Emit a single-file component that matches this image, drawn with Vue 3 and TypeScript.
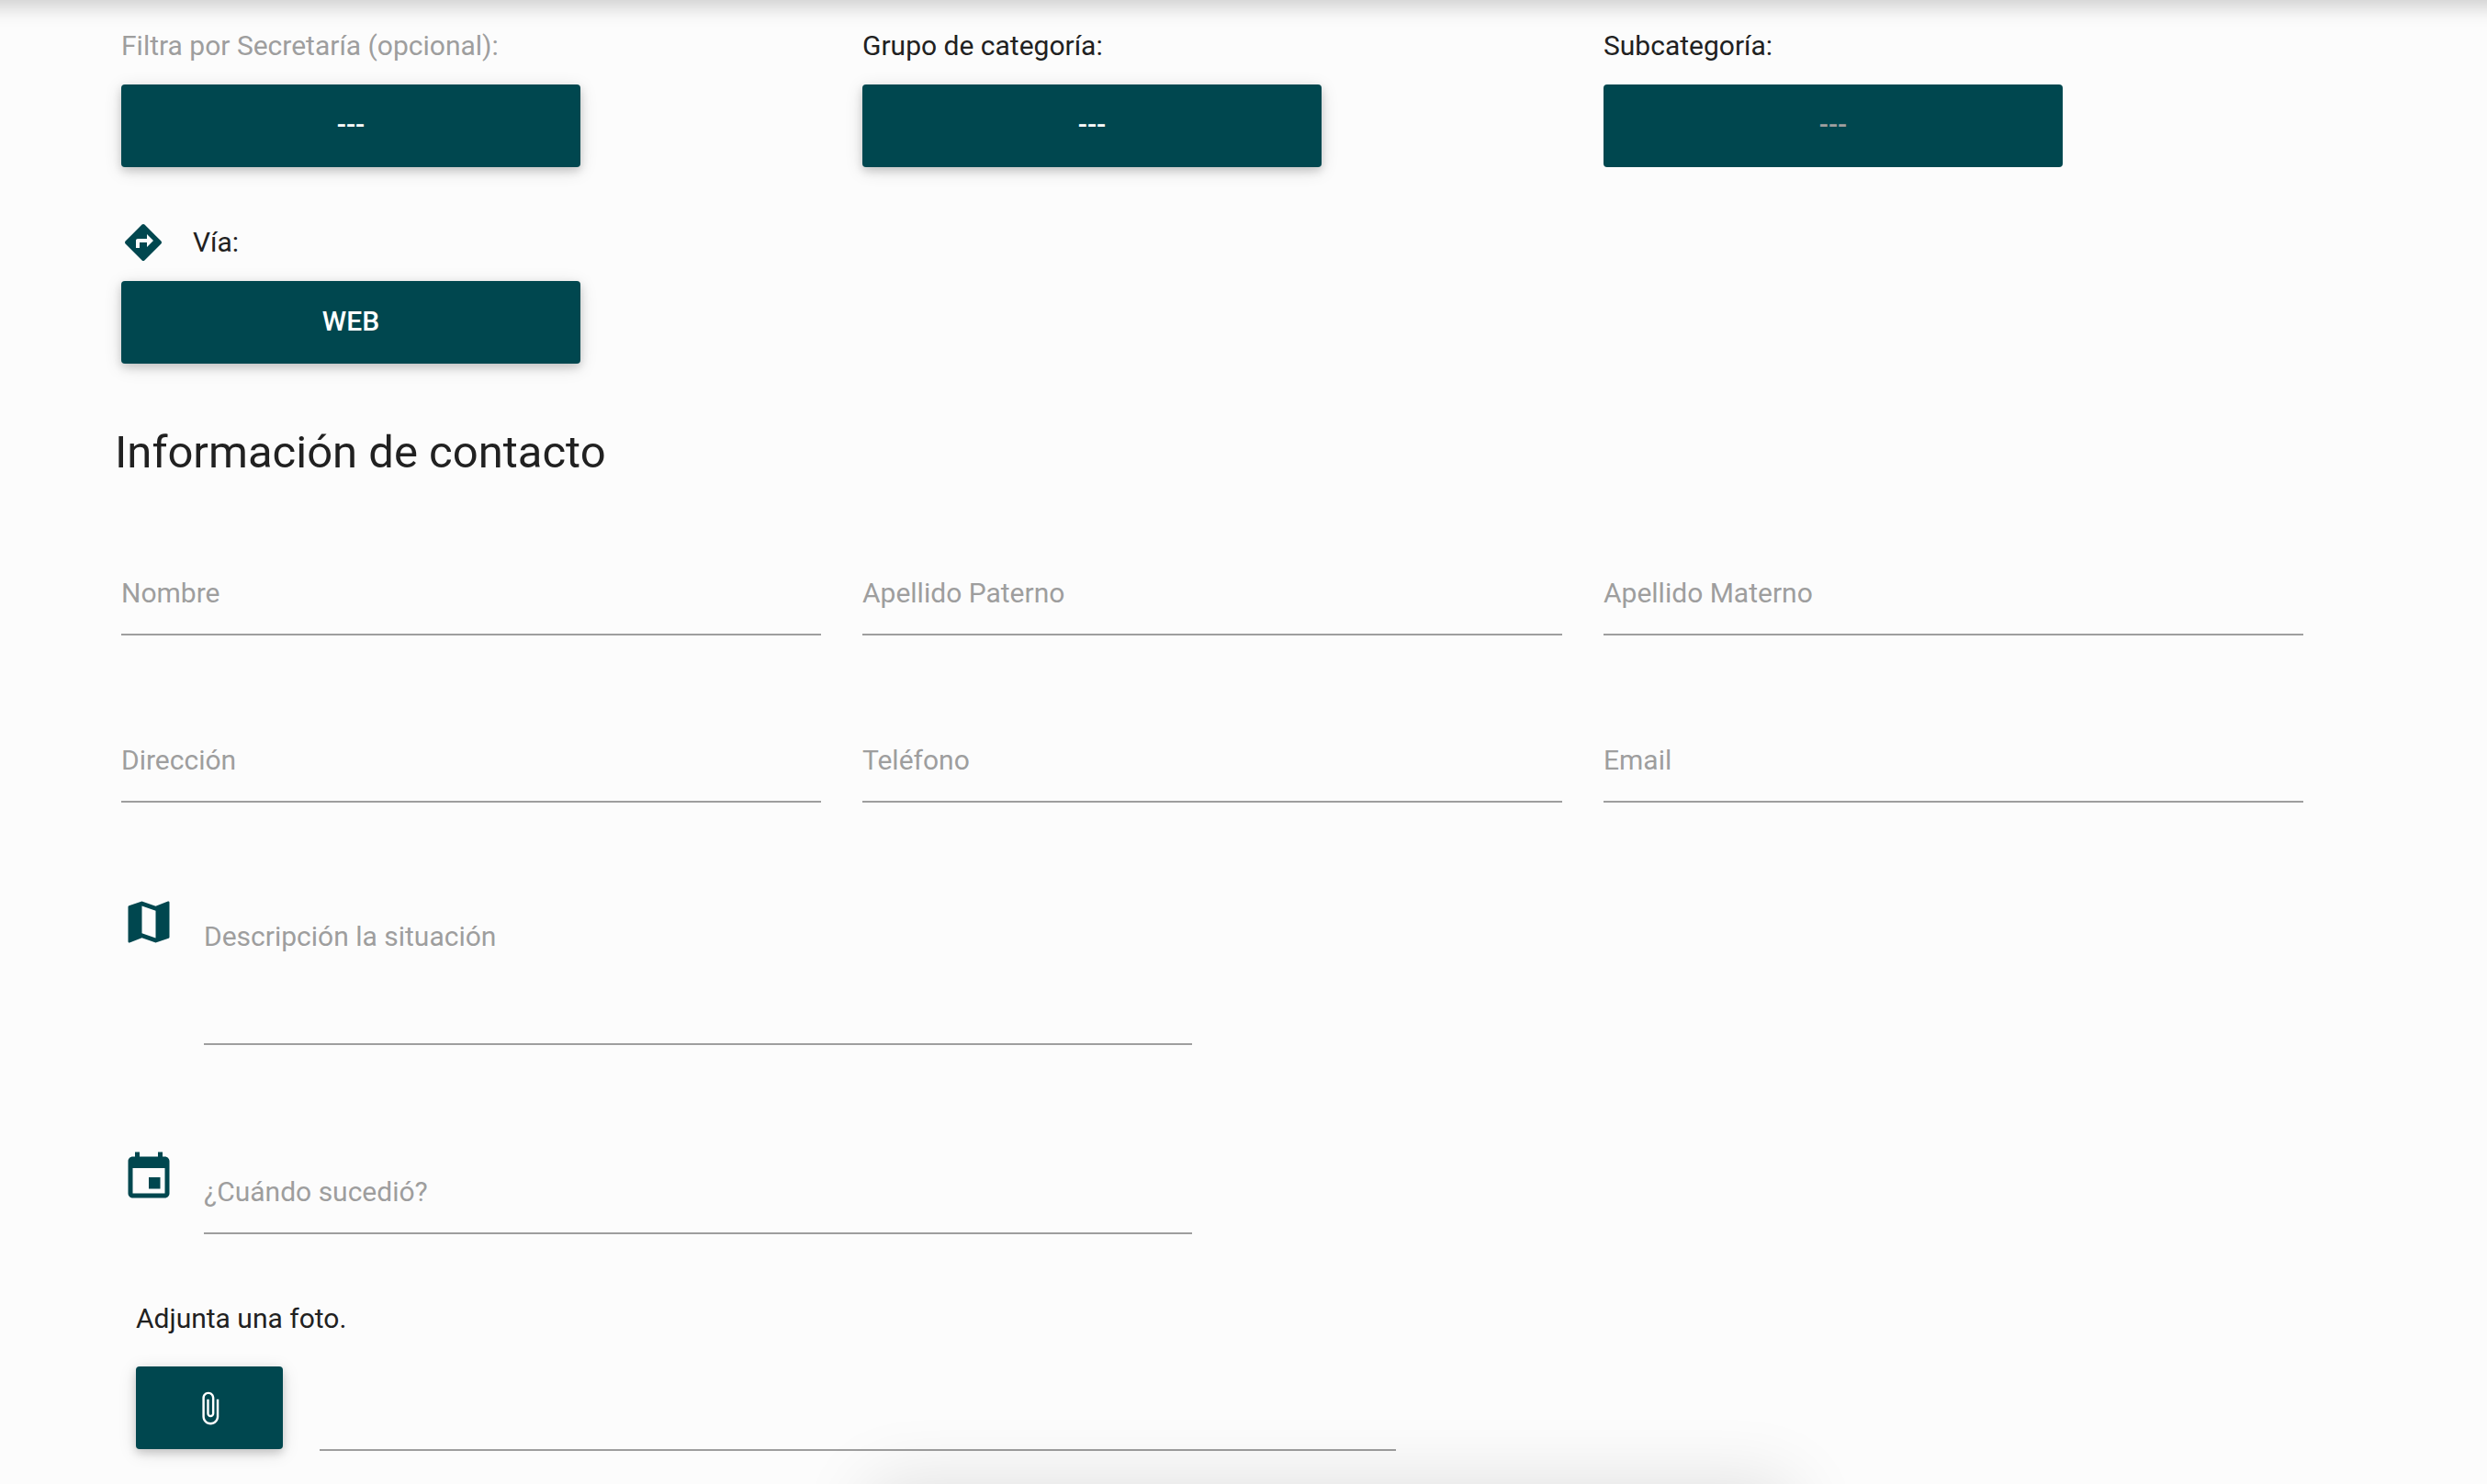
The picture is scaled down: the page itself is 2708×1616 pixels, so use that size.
<script setup lang="ts">
import { reactive, ref } from 'vue'

interface SelectField {
  id: string
  label: string
  options: string[]
  muted?: boolean
  disabled?: boolean
}

interface TextField {
  id: string
  label: string
  type: string
}

const categoryFields: SelectField[] = [
  { id: 'secretaria', label: 'Filtra por Secretaría (opcional):', options: ['---'], muted: true },
  { id: 'grupo', label: 'Grupo de categoría:', options: ['---'] },
  { id: 'subcategoria', label: 'Subcategoría:', options: ['---'], disabled: true },
]

const contactFields: TextField[] = [
  { id: 'nombre', label: 'Nombre', type: 'text' },
  { id: 'paterno', label: 'Apellido Paterno', type: 'text' },
  { id: 'materno', label: 'Apellido Materno', type: 'text' },
  { id: 'direccion', label: 'Dirección', type: 'text' },
  { id: 'telefono', label: 'Teléfono', type: 'tel' },
  { id: 'email', label: 'Email', type: 'email' },
]

const contact = reactive<Record<string, string>>({})
const description = ref('')
const date = ref('')
</script>

<template>
  <div class="page">
    <header class="navbar"></header>

    <form class="form" @submit.prevent>
      <div class="columns">
        <div v-for="field in categoryFields" :key="field.id" class="select-field">
          <label class="caption" :class="{ muted: field.muted }" :for="field.id">{{ field.label }}</label>
          <select :id="field.id" class="btn select" :disabled="field.disabled">
            <option v-for="option in field.options" :key="option">{{ option }}</option>
          </select>
        </div>
      </div>

      <div class="select-field via">
        <label class="caption with-icon" for="via">
          <svg class="icon-small" viewBox="0 0 24 24" aria-hidden="true">
            <path d="M21.71 11.29l-9-9c-.39-.39-1.02-.39-1.41 0l-9 9c-.39.39-.39 1.02 0 1.41l9 9c.39.39 1.02.39 1.41 0l9-9c.39-.38.39-1.01 0-1.41zM14 14.5V12h-4v3H8v-4c0-.55.45-1 1-1h5V7.500l3.500 3.500-3.500 3.500z" />
          </svg>
          <span>Vía:</span>
        </label>
        <select id="via" class="btn select">
          <option>WEB</option>
        </select>
      </div>

      <h2 class="title">Información de contacto</h2>

      <div class="columns contact">
        <div v-for="field in contactFields" :key="field.id" class="input-field">
          <label :for="field.id" v-show="!contact[field.id]">{{ field.label }}</label>
          <input :id="field.id" v-model="contact[field.id]" :type="field.type" />
        </div>
      </div>

      <div class="icon-row description">
        <svg class="icon" viewBox="0 0 24 24" aria-hidden="true">
          <path d="M20.500 3l-.16.03L15 5.100 9 3 3.360 4.900c-.21.07-.36.25-.36.48V20.500c0 .28.22.5.5.5l.16-.03L9 18.900l6 2.100 5.640-1.900c.21-.07.36-.25.36-.48V3.500c0-.28-.22-.5-.5-.5zM15 19l-6-2.110V5l6 2.110V19z" />
        </svg>
        <div class="input-field">
          <label for="descripcion" v-show="!description">Descripción la situación</label>
          <textarea id="descripcion" v-model="description"></textarea>
        </div>
      </div>

      <div class="icon-row date">
        <svg class="icon" viewBox="0 0 24 24" aria-hidden="true">
          <path d="M17 12h-5v5h5v-5zM16 1v2H8V1H6v2H5c-1.110 0-1.990.9-1.990 2L3 19c0 1.100.89 2 2 2h14c1.100 0 2-.9 2-2V5c0-1.100-.9-2-2-2h-1V1h-2zm3 18H5V8h14v11z" />
        </svg>
        <div class="input-field">
          <label for="fecha" v-show="!date">¿Cuándo sucedió?</label>
          <input id="fecha" v-model="date" type="text" />
        </div>
      </div>

      <div class="photo">
        <label class="caption" for="foto">Adjunta una foto.</label>
        <div class="file-row">
          <button type="button" class="btn attach" aria-label="Adjuntar">
            <svg class="clip" viewBox="0 0 24 24" aria-hidden="true">
              <path d="M16.500 6v11.500c0 2.210-1.790 4-4 4s-4-1.790-4-4V5c0-1.380 1.120-2.500 2.500-2.500s2.500 1.120 2.500 2.500v10.500c0 .55-.45 1-1 1s-1-.45-1-1V6H10v9.500c0 1.380 1.120 2.500 2.500 2.500s2.500-1.120 2.500-2.500V5c0-2.210-1.790-4-4-4S7 2.790 7 5v12.500c0 3.040 2.460 5.500 5.500 5.500s5.500-2.460 5.500-5.500V6h-1.500z" />
            </svg>
          </button>
          <input id="foto" class="file-path" type="text" readonly />
        </div>
      </div>
    </form>

    <div class="sheet"></div>
  </div>
</template>

<style>
body {
  margin: 0;
  background: #fcfcfc;
}
</style>

<style scoped>
.page {
  position: relative;
  box-sizing: border-box;
  min-height: 100vh;
  padding: 28px 200px 36px 132px;
  overflow: hidden;
  background: #fcfcfc;
  color: #212121;
  font-family: Roboto, sans-serif;
  font-size: 30px;
  line-height: 44px;
}

/* The bar sits just above the scrolled view and casts its shadow down */
.navbar {
  position: absolute;
  top: -128px;
  left: -40px;
  right: -40px;
  height: 128px;
  box-shadow: 0 8px 20px rgba(0, 0, 0, 0.18);
}

/* Bottom sheet waiting below the fold */
.sheet {
  position: absolute;
  top: 100%;
  left: 35%;
  right: 28%;
  height: 200px;
  box-shadow: 0 0 80px rgba(0, 0, 0, 0.12);
  pointer-events: none;
}

.columns {
  display: grid;
  grid-template-columns: repeat(3, 1fr);
  column-gap: 45px;
}

.select-field {
  display: flex;
  flex-direction: column;
  align-items: flex-start;
  gap: 20px;
}

.caption {
  display: block;
  height: 44px;
}

.muted {
  color: #9e9e9e;
}

.with-icon {
  display: flex;
  align-items: center;
  gap: 30px;
}

.icon-small {
  width: 48px;
  height: 48px;
  fill: #00474f;
}

.btn {
  box-sizing: border-box;
  height: 90px;
  margin: 0;
  padding: 0;
  border: 0;
  border-radius: 4px;
  background: #00474f;
  color: #fff;
  font: 500 30px Roboto, sans-serif;
  box-shadow: 0 4px 10px rgba(0, 0, 0, 0.16), 0 4px 20px rgba(0, 0, 0, 0.12);
  cursor: pointer;
}

.select {
  width: 500px;
  max-width: 100%;
  padding-bottom: 4px;
  appearance: none;
  text-align: center;
  text-align-last: center;
}

.select:disabled {
  color: #9f9f9f;
  opacity: 1;
  box-shadow: none;
  cursor: default;
}

.via {
  margin-top: 60px;
}

.title {
  margin: 67px 0 79px -7px;
  font-size: 49px;
  font-weight: 400;
  line-height: 60px;
}

.contact {
  row-gap: 92px;
}

.input-field {
  display: grid;
}

.input-field > * {
  grid-area: 1 / 1;
}

.input-field label {
  align-self: start;
  margin-top: 22px;
  color: #9e9e9e;
  pointer-events: none;
}

input,
textarea {
  box-sizing: border-box;
  width: 100%;
  min-width: 0;
  height: 90px;
  margin: 0;
  padding: 0;
  border: 0;
  border-bottom: 2px solid #9e9e9e;
  border-radius: 0;
  outline: 0;
  background: transparent;
  color: #212121;
  font: inherit;
}

textarea {
  display: block;
  height: 162px;
  padding-top: 22px;
  resize: none;
}

.icon-row {
  display: grid;
  grid-template-columns: 60px 1fr;
  column-gap: 30px;
  align-items: start;
  width: calc(50% - 22px);
}

.icon {
  width: 60px;
  height: 60px;
  margin-top: -2px;
  fill: #00474f;
}

.description {
  margin-top: 102px;
}

.date {
  margin-top: 116px;
}

.photo {
  width: calc(58% - 6px);
  margin: 70px 0 0 16px;
}

.file-row {
  display: flex;
  align-items: flex-start;
  gap: 40px;
  margin-top: 30px;
}

.attach {
  display: flex;
  flex: 0 0 160px;
  align-items: center;
  justify-content: center;
}

.clip {
  width: 39px;
  height: 39px;
  fill: #fff;
}

.file-path {
  flex: 1;
  height: 92px;
}
</style>
